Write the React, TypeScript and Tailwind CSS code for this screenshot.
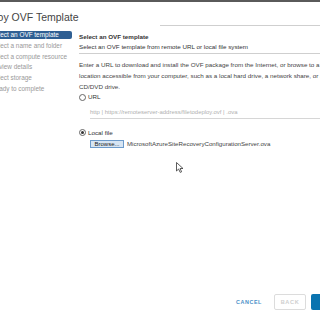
import React from 'react';

const STEPS = [
  'Select an OVF template',
  'Select a name and folder',
  'Select a compute resource',
  'Review details',
  'Select storage',
  'Ready to complete',
];

function Radio({ checked }: { checked?: boolean }) {
  return (
    <span className="w-[7px] h-[7px] rounded-full border border-[#666] bg-white flex items-center justify-center shrink-0">
      {checked && <span className="w-[3px] h-[3px] rounded-full bg-[#333]" />}
    </span>
  );
}

export default function App() {
  return (
    <div className="relative w-[320px] h-[320px] bg-white overflow-hidden flex flex-col text-[#333] font-['Liberation_Sans',Arial,sans-serif]">
      {/* top frame edge */}
      <div className="h-[2px] bg-[#5a5a5a]" />

      {/* title */}
      <div className="h-[23px] pt-[8px] flex items-center">
        <h1 className="ml-[-24px] text-[10.5px] text-[#444] whitespace-nowrap">Deploy OVF Template</h1>
      </div>
      <div className="h-px ml-[160px] bg-[#cfcfcf]" />

      <div className="flex flex-1">
        {/* steps */}
        <nav className="w-[79px] shrink-0 pt-[3.5px] overflow-hidden">
          {STEPS.map((step, i) => (
            <div key={step} className="h-[10.8px] flex items-center">
              {i === 0 ? (
                <span className="w-[72px] h-[8px] flex items-center bg-[#2f5f93] rounded-r-[2px] text-white text-[6.4px] whitespace-nowrap overflow-hidden">
                  <span className="ml-[-9px]">{step}</span>
                </span>
              ) : (
                <span className="ml-[-9px] text-[6.4px] text-[#999] whitespace-nowrap">{step}</span>
              )}
            </div>
          ))}
        </nav>

        {/* content */}
        <div className="flex-1 pt-[5.5px] text-[6.25px] whitespace-nowrap">
          <div className="leading-[10.5px] font-semibold">Select an OVF template</div>
          <div className="leading-[10.5px] border-b border-[#cfcfcf]">
            Select an OVF template from remote URL or local file system
          </div>

          <div className="mt-[5px] leading-[11px] text-[#444]">
            <div>Enter a URL to download and install the OVF package from the Internet, or browse to a</div>
            <div>location accessible from your computer, such as a local hard drive, a network share, or a</div>
            <div>CD/DVD drive.</div>
          </div>

          <label className="h-[11px] flex items-center gap-[2px]">
            <Radio />
            <span>URL</span>
          </label>

          <div className="mt-[4.5px] ml-[11px] h-[12px] flex items-center border-b border-[#d6d6d6] text-[#b0b0b0] text-[5.95px]">
            http | https://remoteserver-address/filetodeploy.ovf | .ova
          </div>

          <label className="mt-[8px] h-[11px] flex items-center gap-[2px]">
            <Radio checked />
            <span>Local file</span>
          </label>

          <div className="mt-[2px] ml-[11px] h-[8px] flex items-center gap-[3px]">
            <span className="h-[8px] w-[34px] flex items-center justify-center bg-[#d7e5f3] border border-[#6d9bcb] text-[#222] text-[6px]">
              Browse...
            </span>
            <span className="text-[6.15px] text-[#444]">MicrosoftAzureSiteRecoveryConfigurationServer.ova</span>
          </div>
        </div>
      </div>

      {/* footer buttons */}
      <div className="h-[16px] mb-[10px] flex items-center justify-end gap-[5px] mr-[-20px]">
        <span className="mr-[7px] text-[5.4px] font-bold tracking-[0.6px] text-[#4a90c8]">CANCEL</span>
        <span className="w-[32px] h-[16px] flex items-center justify-center border border-[#dcdcdc] rounded-[2px] text-[5.6px] font-bold tracking-[0.6px] text-[#cfcfcf]">
          BACK
        </span>
        <span className="w-[29px] h-[16px] bg-[#0a74b0] rounded-[2px]" />
      </div>

      {/* mouse pointer */}
      <svg className="absolute left-[176px] top-[162px]" width="8" height="11" viewBox="0 0 8 11">
        <path d="M0.5 0.5 L0.5 9 L2.6 7 L4.2 10.4 L5.6 9.8 L4.1 6.5 L7 6.5 Z" fill="#fff" stroke="#333" strokeWidth="0.8" strokeLinejoin="round" />
      </svg>
    </div>
  );
}
